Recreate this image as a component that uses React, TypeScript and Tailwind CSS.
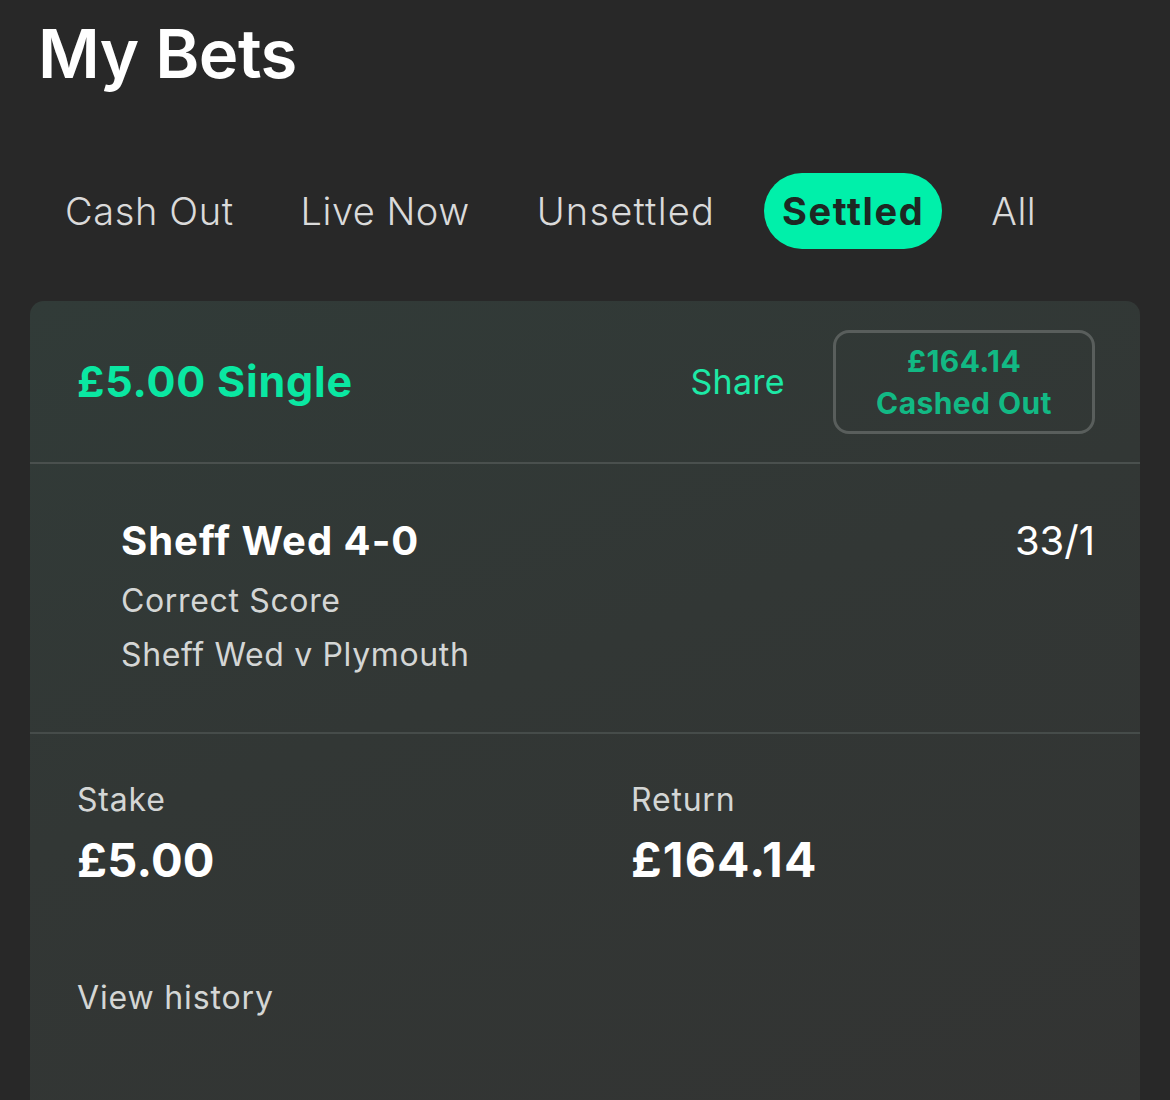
import React from "react";

const tabs = [
  { label: "Cash Out", cls: "tracking-[0.6px]" },
  { label: "Live Now", cls: "tracking-[0.5px]" },
  { label: "Unsettled", cls: "tracking-[1.2px]" },
  { label: "Settled", active: true },
  { label: "All", cls: "tracking-[0.6px]" },
];

export default function App() {
  return (
    <div className="min-h-[1100px] w-[1170px] bg-[#282828] font-['Inter',sans-serif] overflow-hidden">
      <h1 className="pl-[38px] pt-[14px] text-[67px] font-semibold leading-[80px] text-white tracking-[-0.5px]">
        My Bets
      </h1>

      <div className="mt-[79px] flex items-center gap-[31px] pl-[47px]">
        {tabs.map((t) =>
          t.active ? (
            <div
              key={t.label}
              className="flex h-[76px] items-center rounded-full bg-[#00f0aa] px-[18px] text-[38px] font-bold tracking-[1.6px] text-[#1d2823]"
            >
              {t.label}
            </div>
          ) : (
            <div key={t.label} className={`px-[18px] text-[38px] font-light text-[#dadada] ${t.cls}`}>
              {t.label}
            </div>
          )
        )}
      </div>

      <div className="mx-[30px] mt-[52px] h-[820px] rounded-[14px] bg-[linear-gradient(160deg,#313b38_0%,#323735_45%,#333433_100%)]">
        {/* header */}
        <div className="flex h-[163px] items-center border-b-2 border-[#4a504e] pl-[47px] pr-[45px]">
          <div className="text-[43px] font-bold tracking-[0.8px] text-[#0ae7a2]">£5.00 Single</div>
          <div className="ml-auto mr-[48px] text-[34px] font-normal tracking-[0.3px] text-[#1de9a6]">Share</div>
          <div className="flex h-[104px] w-[262px] flex-col items-center justify-center rounded-[16px] border-[3px] border-[#595e5c] text-[30px] font-bold leading-[42px] tracking-[0.4px] text-[#12b984]">
            <span>£164.14</span>
            <span>Cashed Out</span>
          </div>
        </div>

        {/* selection */}
        <div className="flex h-[270px] border-b-2 border-[#464c4a] pl-[91px] pr-[45px] pt-[52px]">
          <div className="flex flex-col">
            <div className="text-[40px] font-bold leading-[50px] tracking-[1px] text-white">Sheff Wed 4-0</div>
            <div className="mt-[8px] text-[32px] leading-[54px] tracking-[0.65px] text-[#d4d6d5]">Correct Score</div>
            <div className="text-[32px] leading-[54px] tracking-[0.65px] text-[#d4d6d5]">Sheff Wed v Plymouth</div>
          </div>
          <div className="ml-auto text-[40px] leading-[50px] text-white">33/1</div>
        </div>

        {/* footer */}
        <div className="grid grid-cols-[554px_1fr] pl-[47px] pt-[46px]">
          <div>
            <div className="text-[32px] leading-[40px] tracking-[0.8px] text-[#d4d6d5]">Stake</div>
            <div className="mt-[12px] text-[47px] font-bold leading-[56px] tracking-[0.2px] text-white">£5.00</div>
          </div>
          <div>
            <div className="text-[32px] leading-[40px] tracking-[0.8px] text-[#d4d6d5]">Return</div>
            <div className="mt-[12px] text-[48px] font-bold leading-[56px] tracking-[1.2px] text-white">£164.14</div>
          </div>
        </div>
        <div className="mt-[86px] pl-[47px] text-[32px] tracking-[0.85px] text-[#d4d6d5]">View history</div>
      </div>
    </div>
  );
}
